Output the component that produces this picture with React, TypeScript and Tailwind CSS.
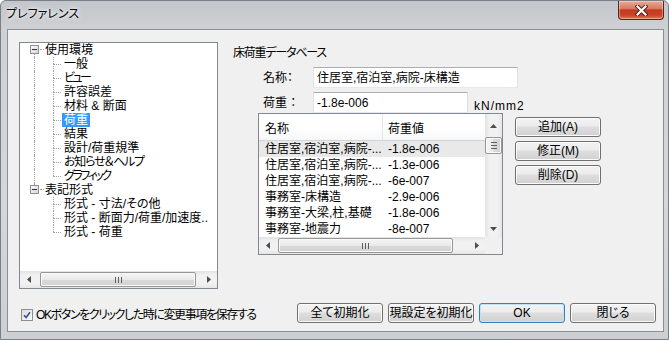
import React from 'react';

const ui = "font-['Liberation_Sans','Noto_Sans_CJK_JP',sans-serif] [font-feature-settings:'palt'] text-[12px] text-black";

// tracking per label: the original font has very narrow kana
const tree = [
  {
    label: '使用環境',
    children: [
      { label: '一般', tr: '' },
      { label: 'ビュー', tr: 'tracking-[-2.5px]' },
      { label: '許容誤差', tr: '' },
      { label: '材料 & 断面', tr: '' },
      { label: '荷重', tr: '' },
      { label: '結果', tr: '' },
      { label: '設計/荷重規準', tr: '' },
      { label: 'お知らせ＆ヘルプ', tr: 'tracking-[-1.2px]' },
      { label: 'グラフィック', tr: 'tracking-[-2.5px]' },
    ],
  },
  {
    label: '表記形式',
    children: [
      { label: '形式 - 寸法/その他', tr: '' },
      { label: '形式 - 断面力/荷重/加速度..', tr: '' },
      { label: '形式 - 荷重', tr: '' },
    ],
  },
];

const loads = [
  ['住居室,宿泊室,病院-...', '-1.8e-006'],
  ['住居室,宿泊室,病院-...', '-1.3e-006'],
  ['住居室,宿泊室,病院-...', '-6e-007'],
  ['事務室-床構造', '-2.9e-006'],
  ['事務室-大梁,柱,基礎', '-1.8e-006'],
  ['事務室-地震力', '-8e-007'],
];

function Arrow({ dir }: { dir: 'up' | 'down' | 'left' | 'right' }) {
  const vert = dir === 'up' || dir === 'down';
  const pts = {
    up: '0,4 3.5,0 7,4',
    down: '0,0 7,0 3.5,4',
    left: '4,0 4,7 0,3.5',
    right: '0,0 4,3.5 0,7',
  }[dir];
  return (
    <svg width={vert ? 7 : 4} height={vert ? 4 : 7} viewBox={vert ? '0 0 7 4' : '0 0 4 7'}>
      <polygon points={pts} fill="#4d4d4d" />
    </svg>
  );
}

function HScroll({ thumb }: { thumb: string }) {
  return (
    <div className="flex h-[17px] bg-[linear-gradient(#e2e2e2,#f1f1f1_25%,#f1f1f1_75%,#e6e6e6)]">
      <div className="flex w-[17px] items-center justify-center">
        <Arrow dir="left" />
      </div>
      <div className="flex flex-1 items-center">
        <div
          className={`flex h-[15px] items-center justify-center rounded-[2px] border border-[#979797] bg-[linear-gradient(#f6f6f6,#e9e9e9_50%,#dadada_50%,#d2d2d2)] shadow-[inset_0_0_0_1px_#fafafa] ${thumb}`}
        >
          <div className="flex gap-[2px]">
            <div className="h-[6px] w-px bg-[#5e5e5e]" />
            <div className="h-[6px] w-px bg-[#5e5e5e]" />
            <div className="h-[6px] w-px bg-[#5e5e5e]" />
          </div>
        </div>
      </div>
      <div className="flex w-[17px] items-center justify-center">
        <Arrow dir="right" />
      </div>
    </div>
  );
}

function WinButton({ children, primary = false }: { children: React.ReactNode; primary?: boolean }) {
  return (
    <button
      className={`h-[20px] w-[86px] rounded-[3px] border p-0 text-center leading-[18px] bg-[linear-gradient(#f3f3f3_0%,#ececec_45%,#dedede_50%,#d0d0d0_100%)] ${
        primary
          ? 'border-[#3c7fb1] shadow-[inset_0_0_0_1px_#bfe3f7]'
          : 'border-[#707070] shadow-[inset_0_0_0_1px_#fbfbfb]'
      } ${ui}`}
    >
      {children}
    </button>
  );
}

function RootRow({ label, first, last }: { label: string; first: boolean; last: boolean }) {
  return (
    <div className="flex h-[14px]">
      <div className="flex w-[19px] flex-col">
        <div className={`ml-[9px] h-[2px] ${first ? '' : 'border-l border-dotted border-[#a0a0a0]'}`} />
        <div className="flex h-[9px] items-center">
          <div className="ml-[5px] flex h-[9px] w-[9px] items-center justify-center border border-[#919191] bg-[linear-gradient(135deg,#fafafa,#d6d6d6)]">
            <div className="h-px w-[5px] bg-[#333]" />
          </div>
          <div className="ml-px w-[4px] border-t border-dotted border-[#a0a0a0]" />
        </div>
        <div className={`ml-[9px] flex-1 ${last ? '' : 'border-l border-dotted border-[#a0a0a0]'}`} />
      </div>
      <span className="px-[1px] leading-[14px]">{label}</span>
    </div>
  );
}

function ChildRow({
  label,
  tr,
  parentHasNext,
  last,
  selected,
}: {
  label: string;
  tr: string;
  parentHasNext: boolean;
  last: boolean;
  selected: boolean;
}) {
  return (
    <div className="flex h-[14px]">
      <div className="w-[19px]">
        {parentHasNext && <div className="ml-[9px] h-full border-l border-dotted border-[#a0a0a0]" />}
      </div>
      <div className="flex w-[18px] flex-col">
        <div className="ml-[9px] h-[7px] border-l border-dotted border-[#a0a0a0]" />
        <div
          className={`ml-[9px] h-[7px] w-[8px] border-t border-dotted border-[#a0a0a0] ${last ? '' : 'border-l'}`}
        />
      </div>
      <span className={`px-[2px] leading-[14px] ${tr} ${selected ? 'bg-[#3399ff] text-white' : ''}`}>{label}</span>
    </div>
  );
}

export default function App() {
  return (
    <div
      className={`flex h-[340px] w-[669px] flex-col overflow-hidden rounded-t-[6px] border border-[#7a7f85] bg-[linear-gradient(180deg,#c3c6ca_0%,#cfd1d4_9%,#d5d7da_60%,#cdd0d3_100%)] ${ui}`}
    >
      {/* title bar */}
      <div className="flex h-[28px] items-start justify-between">
        <div className="pl-[5px] pt-[6px] leading-[14px] [text-shadow:0_0_6px_#ffffff,0_0_3px_#ffffff]">
          プレファレンス
        </div>
        <div className="mr-[4px] flex h-[19px] w-[46px] items-center justify-center rounded-b-[4px] border border-t-0 border-[#5b2418] bg-[linear-gradient(#e9ab98_0%,#d67b62_42%,#c4391d_50%,#c94227_78%,#e07b57_100%)] shadow-[inset_0_0_0_1px_rgba(255,255,255,0.35)]">
          <svg width="13" height="11" viewBox="0 0 13 11">
            <path d="M2.5 1.5 L10.5 9.5 M10.5 1.5 L2.5 9.5" stroke="#4a1a10" strokeWidth="4" strokeLinecap="square" />
            <path d="M2.5 1.5 L10.5 9.5 M10.5 1.5 L2.5 9.5" stroke="#ffffff" strokeWidth="2.2" strokeLinecap="square" />
          </svg>
        </div>
      </div>

      {/* client area */}
      <div className="ml-[6px] flex h-[303px] w-[657px] flex-col border border-[#8c9096] bg-[#f0f0f0]">
        <div className="flex pl-[11px] pt-[12px]">
          {/* tree */}
          <div className="flex h-[247px] w-[199px] flex-col border border-[#828790] bg-white">
            <div className="flex-1 overflow-hidden whitespace-nowrap pl-[5px]">
              {tree.map((root, ri) => (
                <div key={root.label}>
                  <RootRow label={root.label} first={ri === 0} last={ri === tree.length - 1} />
                  {root.children.map((c, ci) => (
                    <ChildRow
                      key={c.label}
                      label={c.label}
                      tr={c.tr}
                      parentHasNext={ri < tree.length - 1}
                      last={ci === root.children.length - 1}
                      selected={c.label === '荷重'}
                    />
                  ))}
                </div>
              ))}
            </div>
            <HScroll thumb="ml-[3px] w-[156px]" />
          </div>

          {/* right panel */}
          <div className="ml-[15px] flex flex-col">
            <div className="mt-[4px] leading-[14px] tracking-[-1.2px]">床荷重データベース</div>

            <div className="mt-[7px] flex h-[21px] items-center">
              <div className="ml-[30px] w-[50px]">名称：</div>
              <div className="flex h-[21px] w-[205px] items-center border border-[#abadb3] border-b-[#e3e9ef] border-l-[#e2e3ea] border-r-[#dbdfe6] bg-white pl-[3px]">
                住居室,宿泊室,病院-床構造
              </div>
            </div>

            <div className="mt-[4px] flex h-[21px] items-end">
              <div className="ml-[30px] flex h-[21px] w-[50px] items-center">荷重 ：</div>
              <div className="flex h-[21px] w-[155px] items-center border border-[#abadb3] border-b-[#e3e9ef] border-l-[#e2e3ea] border-r-[#dbdfe6] bg-white pl-[3px]">
                -1.8e-006
              </div>
              <div className="ml-[6px] leading-[14px] tracking-[1px]">kN/mm2</div>
            </div>

            <div className="flex">
              {/* list */}
              <div className="ml-[25px] flex h-[142px] w-[245px] flex-col border border-[#828790] bg-white">
                <div className="flex min-h-0 flex-1">
                  <div className="flex flex-1 flex-col whitespace-nowrap">
                    <div className="flex h-[27px] border-b border-[#d5d5d5] bg-[linear-gradient(#ffffff,#ffffff_55%,#f6f7f9)]">
                      <div className="flex w-[124px] items-center border-r border-[#e3e8ee] pl-[6px] pt-[4px]">名称</div>
                      <div className="flex flex-1 items-center pl-[5px] pt-[4px]">荷重値</div>
                    </div>
                    {loads.map(([name, val], i) => (
                      <div key={i} className={`flex h-[16px] items-center ${i === 0 ? 'bg-[#e9e9e9]' : ''}`}>
                        <div className="w-[124px] pl-[6px] leading-[16px]">{name}</div>
                        <div className="pl-[5px] leading-[16px]">{val}</div>
                      </div>
                    ))}
                  </div>
                  <div className="flex w-[17px] flex-col bg-[linear-gradient(90deg,#e2e2e2,#f1f1f1_25%,#f1f1f1_75%,#e6e6e6)]">
                    <div className="flex h-[23px] items-center justify-center">
                      <Arrow dir="up" />
                    </div>
                    <div className="flex h-[17px] flex-col items-center justify-center rounded-[2px] border border-[#979797] bg-[linear-gradient(90deg,#f6f6f6,#e9e9e9_50%,#dadada_50%,#d2d2d2)] shadow-[inset_0_0_0_1px_#fafafa]">
                      <div className="flex flex-col gap-[2px]">
                        <div className="h-px w-[6px] bg-[#5e5e5e]" />
                        <div className="h-px w-[6px] bg-[#5e5e5e]" />
                        <div className="h-px w-[6px] bg-[#5e5e5e]" />
                      </div>
                    </div>
                    <div className="flex-1" />
                    <div className="flex h-[17px] items-center justify-center">
                      <Arrow dir="down" />
                    </div>
                  </div>
                </div>
                <div className="flex">
                  <div className="flex-1">
                    <HScroll thumb="ml-[2px] w-[175px]" />
                  </div>
                  <div className="h-[17px] w-[17px] bg-[#f0f0f0]" />
                </div>
              </div>

              {/* side buttons */}
              <div className="ml-[12px] mt-[4px] flex flex-col gap-[4px]">
                <WinButton>追加(A)</WinButton>
                <WinButton>修正(M)</WinButton>
                <WinButton>削除(D)</WinButton>
              </div>
            </div>
          </div>
        </div>

        {/* bottom row */}
        <div className="mt-[14px] flex items-center pr-[7px]">
          <div className="ml-[13px] mt-[3px] flex items-center">
            <div className="flex h-[12px] w-[12px] items-center justify-center border border-[#8e8f8f] bg-[linear-gradient(135deg,#d9dbde,#fbfbfb)]">
              <svg width="8" height="8" viewBox="0 0 8 8">
                <path d="M1 4.2 L3.1 6.4 L7 1.2" stroke="#3b5290" strokeWidth="1.6" fill="none" />
              </svg>
            </div>
            <span className="ml-[3px] leading-[14px] tracking-[-1.4px]">
              OKボタンをクリックした時に変更事項を保存する
            </span>
          </div>
          <div className="ml-auto flex gap-[5px]">
            <WinButton>全て初期化</WinButton>
            <WinButton>現設定を初期化</WinButton>
            <WinButton primary>OK</WinButton>
            <WinButton>閉じる</WinButton>
          </div>
        </div>
      </div>
    </div>
  );
}
